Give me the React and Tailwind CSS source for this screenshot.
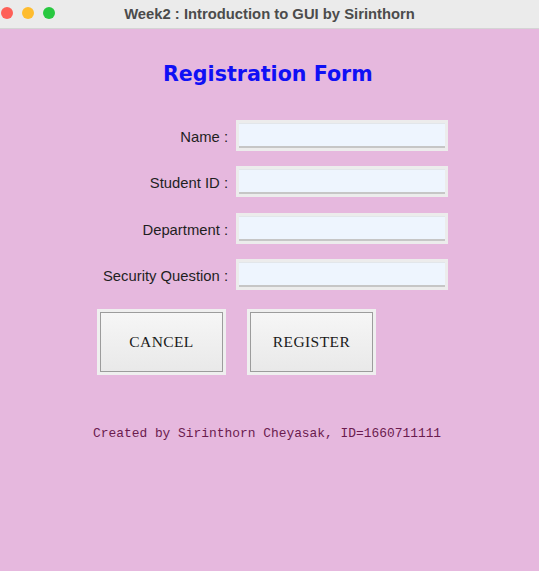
import React from 'react';

const fields = ['Name :', 'Student ID :', 'Department :', 'Security Question :'];

function Field({ label }) {
  return (
    <div className="flex items-center h-[31px]">
      <div className="w-[228px] text-right text-[14.8px] text-[#1f1f1f] pt-[3px]">{label}</div>
      <div className="ml-2 w-[212px] h-[31px] bg-[#ececec] p-[3px]">
        <div className="h-full bg-[#eef5fe] border-t border-[#e2e6ea] border-b-2 border-b-[#c6c6c6]" />
      </div>
    </div>
  );
}

function FormButton({ children }) {
  return (
    <div className="w-[129px] h-[66px] bg-[#efefef] p-[3px]">
      <button className="w-full h-full border border-[#9c9c9c] bg-gradient-to-b from-[#f6f6f6] to-[#e9e9e9] text-[15.5px] text-[#1a1a1a] tracking-[0.4px]" style={{ fontFamily: '"Liberation Serif", serif' }}>
        {children}
      </button>
    </div>
  );
}

export default function App() {
  return (
    <div className="w-[539px] h-[571px] flex flex-col bg-[#e6b8de]" style={{ fontFamily: '"Liberation Sans", Arial, sans-serif' }}>
      {/* title bar */}
      <div className="relative h-[29px] shrink-0 bg-[#ebebeb] border-b border-[#d4d4d4] flex items-center justify-center">
        <div className="absolute left-[1px] top-[7px] flex gap-[9px]">
          <span className="w-[12px] h-[12px] rounded-full bg-[#fe5f57]" />
          <span className="w-[12px] h-[12px] rounded-full bg-[#febc2e]" />
          <span className="w-[12px] h-[12px] rounded-full bg-[#28c840]" />
        </div>
        <span className="text-[14.8px] font-bold text-[#4b4b4b]">Week2 : Introduction to GUI by Sirinthorn</span>
      </div>

      <div className="flex flex-col">
        <h1 className="mt-[30px] ml-[163px] text-[20.6px] font-bold text-[#1010f5] leading-[30px]" style={{ fontFamily: '"Comic Sans MS", "DejaVu Sans", sans-serif' }}>
          Registration Form
        </h1>

        <div className="mt-[31px] flex flex-col gap-[15.3px]">
          {fields.map((f) => (
            <Field key={f} label={f} />
          ))}
        </div>

        <div className="mt-[19px] ml-[97px] flex gap-[21px]">
          <FormButton>CANCEL</FormButton>
          <FormButton>REGISTER</FormButton>
        </div>

        <div className="mt-[51px] ml-[93px] text-[12.9px] text-[#6b1b4e] leading-[16px]" style={{ fontFamily: '"Liberation Mono", monospace' }}>
          Created by Sirinthorn Cheyasak, ID=1660711111
        </div>
      </div>
    </div>
  );
}
